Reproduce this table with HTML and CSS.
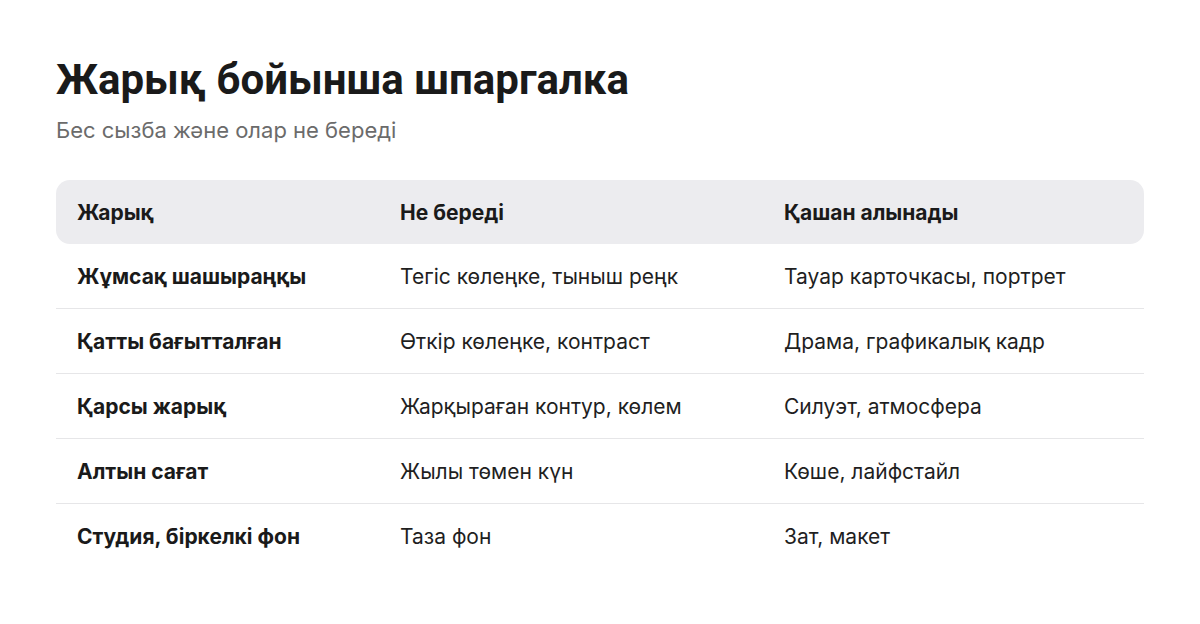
FILE: index.html
```html
<!DOCTYPE html>
<html lang="kk">
<head>
<meta charset="utf-8">
<link rel="stylesheet" href="styles.css">
</head>
<body>
<main class="page">
  <h1 class="title">Жарық бойынша шпаргалка</h1>
  <p class="subtitle">Бес сызба және олар не береді</p>
  <div class="table">
    <div class="row head">
      <div class="cell">Жарық</div>
      <div class="cell">Не береді</div>
      <div class="cell">Қашан алынады</div>
    </div>
    <div class="row">
      <div class="cell name">Жұмсақ шашыраңқы</div>
      <div class="cell">Тегіс көлеңке, тыныш реңк</div>
      <div class="cell">Тауар карточкасы, портрет</div>
    </div>
    <div class="row">
      <div class="cell name">Қатты бағытталған</div>
      <div class="cell">Өткір көлеңке, контраст</div>
      <div class="cell">Драма, графикалық кадр</div>
    </div>
    <div class="row">
      <div class="cell name">Қарсы жарық</div>
      <div class="cell">Жарқыраған контур, көлем</div>
      <div class="cell">Силуэт, атмосфера</div>
    </div>
    <div class="row">
      <div class="cell name">Алтын сағат</div>
      <div class="cell">Жылы төмен күн</div>
      <div class="cell">Көше, лайфстайл</div>
    </div>
    <div class="row last">
      <div class="cell name">Студия, біркелкі фон</div>
      <div class="cell">Таза фон</div>
      <div class="cell">Зат, макет</div>
    </div>
  </div>
</main>
</body>
</html>
```
FILE: styles.css
```css
html, body {
  margin: 0;
  padding: 0;
  background: #ffffff;
}
.page {
  padding: 56px 56px 0 56px;
  font-family: Inter, "Noto Sans", sans-serif;
  color: #1a1a1a;
}
.title {
  margin: 0;
  font-family: Roboto, "Liberation Sans", sans-serif;
  font-weight: 700;
  font-size: 42px;
  line-height: 48px;
  color: #1a1a1a;
  letter-spacing: 0;
}
.subtitle {
  margin: 12px 0 0 0;
  font-family: Inter, "Noto Sans", sans-serif;
  font-size: 22px;
  line-height: 28px;
  color: #6b6b6b;
}
.table {
  margin-top: 36px;
}
.row {
  display: grid;
  grid-template-columns: 323px 384px 1fr;
  height: 64px;
  align-items: center;
  border-bottom: 1px solid #e6e6e8;
  font-size: 21px;
  color: #1f1f1f;
}
.row.head {
  background: #ececef;
  border-radius: 14px;
  border-bottom: none;
  font-weight: 700;
  color: #1a1a1a;
}
.row.last {
  border-bottom: none;
}
.cell {
  padding: 0 20px 0 21px;
  white-space: nowrap;
}
.cell.name {
  font-weight: 700;
  color: #1a1a1a;
}
```
